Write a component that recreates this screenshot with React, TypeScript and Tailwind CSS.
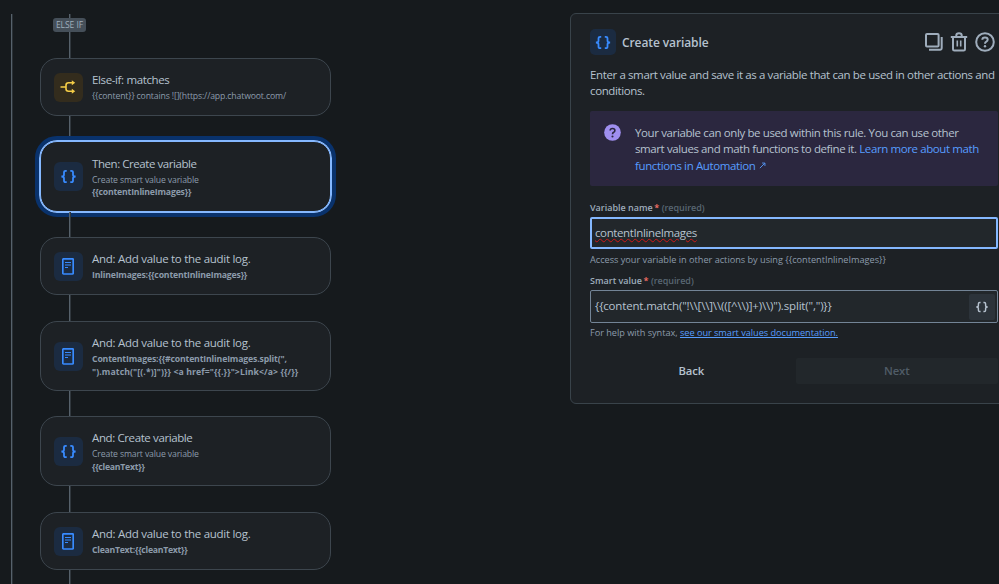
import React from "react";

const BracesIcon = ({ className }: { className: string }) => (
  <svg viewBox="0 0 18 16" className={className} fill="none" stroke="currentColor" strokeWidth="1.9">
    <path d="M7.1 1.9H6Q4.2 1.9 4.2 3.6V6Q4.2 8 1.4 8Q4.2 8 4.2 10V12.4Q4.2 14.1 6 14.1H7.1" />
    <path d="M10.9 1.9H12Q13.8 1.9 13.8 3.6V6Q13.8 8 16.6 8Q13.8 8 13.8 10V12.4Q13.8 14.1 12 14.1H10.9" />
  </svg>
);

const LogIcon = () => (
  <svg viewBox="0 0 12 17" className="h-[17px] w-[12px]" fill="none" stroke="currentColor">
    <rect x="0.8" y="0.8" width="10.4" height="15.2" rx="0.8" strokeWidth="1.7" />
    <path d="M3 4.5H9M3 7H9M3 9.5H6" strokeWidth="1.2" />
  </svg>
);

const BranchIcon = () => (
  <svg viewBox="0 0 16 14" className="h-[14px] w-[16px]" fill="none" stroke="currentColor" strokeWidth="1.6">
    <path d="M0.5 7H6M13 2.8H8.5Q6 2.8 6 5.2V8.8Q6 11.2 8.5 11.2H13" />
    <path d="M11.8 0.3L15.2 2.8L11.8 5.3ZM11.8 8.7L15.2 11.2L11.8 13.7Z" fill="currentColor" stroke="none" />
  </svg>
);

const CopyIcon = () => (
  <svg viewBox="0 0 18 18" className="h-[18px] w-[18px]" fill="none" stroke="currentColor" strokeWidth="2">
    <rect x="1" y="1" width="12.6" height="12.6" rx="1" />
    <path d="M16.7 4V15.3Q16.7 16.7 15.3 16.7H4" />
  </svg>
);

const TrashIcon = () => (
  <svg viewBox="0 0 18 20" className="h-[20px] w-[18px]" fill="none" stroke="currentColor" strokeWidth="2">
    <path d="M0.8 4.9H17.2M3 5V17.2Q3 18.6 4.4 18.6H13.6Q15 18.6 15 17.2V5M6.3 4.5V3.3Q6.3 1.2 9 1.2Q11.7 1.2 11.7 3.3V4.5" />
    <path d="M7.3 8.5V14.5M10.7 8.5V14.5" strokeWidth="1.6" />
  </svg>
);

const HelpIcon = () => (
  <svg viewBox="0 0 20 20" className="h-[20px] w-[20px]" fill="none" stroke="currentColor" strokeWidth="2">
    <circle cx="10" cy="10" r="8.8" />
    <path d="M7.3 7.8Q7.3 5.4 10 5.4Q12.7 5.4 12.7 7.6Q12.7 8.9 11.3 9.7Q10 10.4 10 11.8" />
    <circle cx="10" cy="14.3" r="1.2" fill="currentColor" stroke="none" />
  </svg>
);

const HelpSolidIcon = () => (
  <svg viewBox="0 0 18 18" className="h-[17px] w-[17px]" fill="none">
    <circle cx="9" cy="9" r="8.8" fill="#9f8fef" />
    <path d="M6.5 7Q6.5 4.7 9 4.7Q11.5 4.7 11.5 6.8Q11.5 8 10.2 8.8Q9 9.5 9 10.8" stroke="#2b273f" strokeWidth="1.7" />
    <circle cx="9" cy="13.2" r="1.1" fill="#2b273f" />
  </svg>
);

type CardProps = {
  kind: "branch" | "variable" | "log";
  title: string;
  titleClass: string;
  height: string;
  selected?: boolean;
  children: React.ReactNode;
};

const Card = ({ kind, title, titleClass, height, selected, children }: CardProps) => (
  <div
    className={`flex w-[291px] shrink-0 items-center rounded-[17px] border bg-[#1d2125] pl-[12.5px] ${height} ${
      selected ? "border-[#85b8ff] ring-1 ring-[#85b8ff] outline-[4px] outline-offset-[1px] outline-[#09326c]" : "border-[#3d464e]"
    }`}
  >
    <div
      className={`flex h-[29px] w-[29px] shrink-0 items-center justify-center rounded-[6px] ${
        kind === "branch" ? "bg-[#332c1d] text-[#f5cd47]" : "bg-[#1b2b41] text-[#388bff]"
      }`}
    >
      {kind === "branch" && <BranchIcon />}
      {kind === "variable" && <BracesIcon className="h-[15px] w-[17px]" />}
      {kind === "log" && <LogIcon />}
    </div>
    <div className="ml-[9.5px] text-[8.7px] leading-[12.3px] tracking-[-0.15px] whitespace-nowrap text-[#8c9bab]">
      <div className={`mb-[2px] text-[11.5px] leading-[17px] text-[#b6c2cf] ${titleClass}`}>{title}</div>
      {children}
    </div>
  </div>
);

const Link = ({ height }: { height: string }) => (
  <div className={`ml-[29px] w-[2px] shrink-0 border-r border-[#30373d] bg-[#56616b] ${height}`} />
);

const Label = ({ text }: { text: string }) => (
  <div className="flex h-[12px] items-center text-[9px] leading-[12px] font-semibold">
    <span className="text-[#9fadbc]">{text}</span>
    <span className="ml-[1.5px] text-[#f87168]">*</span>
    <span className="ml-[2.5px] tracking-[-0.05px] text-[#596773]">(required)</span>
  </div>
);

export default function App() {
  return (
    <div className="flex h-[584px] w-[999px] overflow-hidden bg-[#161a1d] font-['Open_Sans',sans-serif] text-[#b6c2cf]">
      <div className="mt-[14px] ml-[11px] w-[2px] shrink-0 border-r border-[#2a3136] bg-[#56616b]" />
      <div className="ml-[27px] flex w-[291px] shrink-0 flex-col pt-[14px]">
        <Link height="h-[4px]" />
        <div className="ml-[13px] flex h-[14px] w-[33px] shrink-0 items-center justify-center rounded-[3px] bg-[#454f59] text-[8.5px] tracking-[-0.05px] text-[#9fadbc]">
          ELSE IF
        </div>
        <Link height="h-[26px]" />
        <Card kind="branch" title="Else-if: matches" titleClass="tracking-[-0.37px]" height="h-[58px]">
          <div>{"{{content}} contains ![](https://app.chatwoot.com/"}</div>
        </Card>
        <Link height="h-[25px]" />
        <Card kind="variable" title="Then: Create variable" titleClass="tracking-[-0.44px]" height="h-[71px]" selected>
          <div>Create smart value variable</div>
          <div className="font-bold tracking-[-0.18px]">{"{{contentInlineImages}}"}</div>
        </Card>
        <Link height="h-[25px]" />
        <Card kind="log" title="And: Add value to the audit log." titleClass="tracking-[-0.28px]" height="h-[58px]">
          <div className="font-bold tracking-[-0.18px]">{"InlineImages:{{contentInlineImages}}"}</div>
        </Card>
        <Link height="h-[26px]" />
        <Card kind="log" title="And: Add value to the audit log." titleClass="tracking-[-0.28px]" height="h-[70px]">
          <div className="font-bold tracking-[-0.15px]">{'ContentImages:{{#contentInlineImages.split(",'}</div>
          <div className="font-bold tracking-[0.1px]">{'").match("[(.*)]")}} <a href="{{.}}">Link</a> {{/}}'}</div>
        </Card>
        <Link height="h-[25px]" />
        <Card kind="variable" title="And: Create variable" titleClass="tracking-[-0.39px]" height="h-[70px]">
          <div>Create smart value variable</div>
          <div className="font-bold tracking-[-0.25px]">{"{{cleanText}}"}</div>
        </Card>
        <Link height="h-[26px]" />
        <Card kind="log" title="And: Add value to the audit log." titleClass="tracking-[-0.28px]" height="h-[58px]">
          <div className="font-bold tracking-[-0.27px]">{"CleanText:{{cleanText}}"}</div>
        </Card>
        <Link height="h-[14px]" />
      </div>

      <div className="mt-[13px] ml-[239px] h-[391px] w-[450px] shrink-0 rounded-[6px] border border-[#39434a] bg-[#1d2125] pt-[15px] pl-[19px]">
        <div className="w-[408px]">
          <div className="flex h-[26px] items-center">
            <div className="flex h-[26px] w-[26px] items-center justify-center rounded-[5px] bg-[#1b2b41] text-[#388bff]">
              <BracesIcon className="h-[15px] w-[18px]" />
            </div>
            <div className="ml-[6px] pt-[2px] text-[12px] font-semibold tracking-[-0.1px]">Create variable</div>
            <div className="ml-auto flex items-center gap-[7px] pr-[3px] text-[#9fadbc]">
              <CopyIcon />
              <TrashIcon />
              <HelpIcon />
            </div>
          </div>
          <div className="mt-[12px] text-[11.5px] leading-[16px] tracking-[-0.38px] whitespace-nowrap">
            <div>Enter a smart value and save it as a variable that can be used in other actions and</div>
            <div>conditions.</div>
          </div>
          <div className="mt-[12px] flex h-[75px] rounded-[2px] bg-[#2b273f] pt-[13px] pl-[14px]">
            <HelpSolidIcon />
            <div className="ml-[14px] pt-[1px] text-[11.5px] leading-[16.3px] tracking-[-0.38px] whitespace-nowrap">
              <div>Your variable can only be used within this rule. You can use other</div>
              <div className="tracking-[-0.4px]">
                smart values and math functions to define it. <span className="text-[#579dff]">Learn more about math</span>
              </div>
              <div className="flex items-center text-[#579dff]">
                <span>functions in Automation</span>
                <svg viewBox="0 0 8 8" className="ml-[4px] h-[7px] w-[7px]" fill="none" stroke="currentColor">
                  <path d="M1 7L6.5 1.5M3.5 1.2H6.8V4.5" />
                </svg>
              </div>
            </div>
          </div>
          <div className="mt-[16px]">
            <Label text="Variable name" />
          </div>
          <div className="mt-[3px] flex h-[32px] items-center rounded-[2px] border-2 border-[#85b8ff] bg-[#22272b] pl-[3px] text-[11.5px]">
            <span className="tracking-[-0.39px] underline decoration-[#d01818] decoration-wavy decoration-[0.7px] underline-offset-[1px]">
              contentInlineImages
            </span>
          </div>
          <div className="mt-[4px] text-[9.2px] leading-[14px] tracking-[-0.02px] text-[#8c9bab]">
            {"Access your variable in other actions by using {{contentInlineImages}}"}
          </div>
          <div className="mt-[8px]">
            <Label text="Smart value" />
          </div>
          <div className="mt-[3px] flex h-[33px] items-center rounded-[2px] border border-[#738496] bg-[#22272b] pr-[2px] pl-[4px] text-[11.5px]">
            <span className="pb-[1px] tracking-[-0.17px]">{'{{content.match("!\\\\[\\\\]\\\\(([^\\\\)]+)\\\\)").split(",")}}'}</span>
            <div className="ml-auto flex h-[26px] w-[26px] items-center justify-center rounded-[2px] bg-[#2c333a]">
              <BracesIcon className="h-[12px] w-[14px]" />
            </div>
          </div>
          <div className="mt-[3px] text-[9.2px] leading-[14px] tracking-[-0.04px] text-[#8c9bab]">
            For help with syntax, <span className="text-[#579dff] underline">see our smart values documentation.</span>
          </div>
          <div className="mt-[18px] flex h-[26px] gap-[3px] text-[11.3px] font-semibold tracking-[-0.1px]">
            <div className="flex flex-1 items-center justify-center">Back</div>
            <div className="flex flex-1 items-center justify-center rounded-[2px] bg-[#22272b] text-[#505c67]">Next</div>
          </div>
        </div>
      </div>
    </div>
  );
}
